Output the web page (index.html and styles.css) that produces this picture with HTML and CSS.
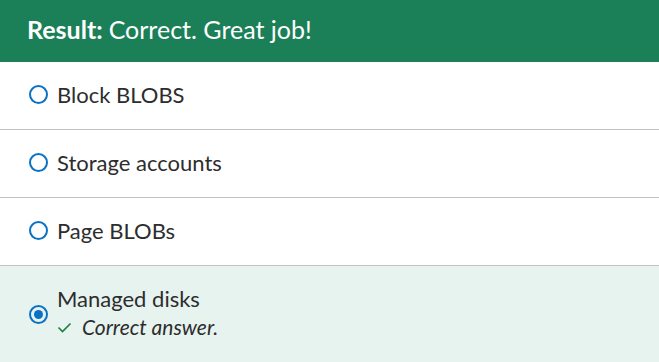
FILE: index.html
```html
<!DOCTYPE html>
<html lang="en">
  <head>
    <meta charset="UTF-8" />
    <meta name="viewport" content="width=device-width, initial-scale=1.0" />
    <title>Result</title>
    <link rel="stylesheet" href="styles.css">
  </head>
  <body>
    <div class="result">
      <div class="banner"><b>Result:</b> Correct. Great job!</div>
      <ul class="options">
        <li class="option">
          <span class="radio"></span>
          <span class="label">Block BLOBS</span>
        </li>
        <li class="option">
          <span class="radio"></span>
          <span class="label">Storage accounts</span>
        </li>
        <li class="option">
          <span class="radio"></span>
          <span class="label">Page BLOBs</span>
        </li>
        <li class="option correct">
          <span class="radio checked"></span>
          <div class="answer">
            <span class="label">Managed disks</span>
            <span class="note">
              <svg width="15" height="14" viewBox="0 0 15 14"><path d="M1.5 7.5 L5.5 11.5 L13.5 3.5" fill="none" stroke="#1e7f3c" stroke-width="1.6"/></svg>
              <i>Correct answer.</i>
            </span>
          </div>
        </li>
      </ul>
    </div>
  </body>
</html>
```

FILE: styles.css
```css
body {
  margin: 0;
  font-family: Lato, "Open Sans", sans-serif;
  color: #2d2d2d;
  background-color: #fff;
}

.banner {
  background-color: #1b7f57;
  color: #fff;
  font-size: 25px;
  height: 62px;
  display: flex;
  align-items: center;
  padding: 0 27px;
  padding-bottom: 4px;
  box-sizing: border-box;
}

.banner b {
  margin-right: 6px;
}

.options {
  list-style: none;
  margin: 0;
  padding: 0;
}

.option {
  display: flex;
  align-items: center;
  gap: 9px;
  height: 68px;
  padding: 0 29px;
  padding-bottom: 3px;
  box-sizing: border-box;
  border-bottom: 1px solid #c2c2c2;
  font-size: 22px;
}

.option.correct {
  border-bottom: none;
  background-color: #e7f3ee;
  height: 96px;
  padding-bottom: 0;
}

.radio {
  width: 15px;
  height: 15px;
  border: 2px solid #0b72c3;
  border-radius: 50%;
  flex-shrink: 0;
  display: flex;
  align-items: center;
  justify-content: center;
}

.radio.checked::after {
  content: "";
  width: 9px;
  height: 9px;
  border-radius: 50%;
  background-color: #0b72c3;
}

.answer {
  display: flex;
  flex-direction: column;
  gap: 2px;
  margin-top: -4px;
}

.note {
  font-size: 21px;
  display: flex;
  align-items: center;
  gap: 10px;
}
```
